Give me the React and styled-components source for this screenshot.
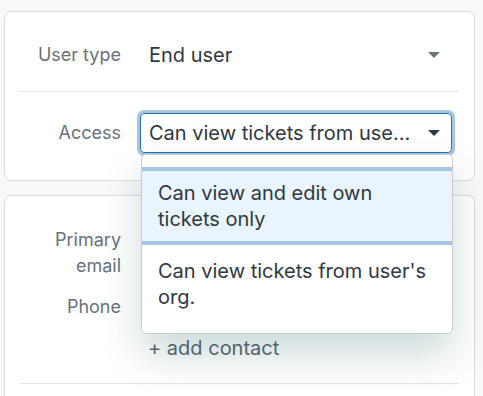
import styled, { createGlobalStyle } from "styled-components";

const GlobalStyle = createGlobalStyle`
  body {
    margin: 0;
    background: #f8f9f9;
    font-family: Inter, "Noto Sans", sans-serif;
    -webkit-font-smoothing: antialiased;
  }
`;

const accessOptions = [
  "Can view and edit own tickets only",
  "Can view tickets from user's org.",
];

function Caret({ color }) {
  return (
    <CaretSvg width="12" height="6" viewBox="0 0 12 6">
      <path d="M0 0h12L6 6z" fill={color} />
    </CaretSvg>
  );
}

function App() {
  return (
    <Page>
      <GlobalStyle />
      <Card>
        <Row $top={23} $bottom={16} $divider>
          <Label>User type</Label>
          <Trigger>
            <Value>End user</Value>
            <Caret color="#68737d" />
          </Trigger>
        </Row>
        <Row $top={21} $bottom={27}>
          <Label>Access</Label>
          <Field>
            <Trigger $focused>
              <Value>Can view tickets from user's org.</Value>
              <Caret color="#2f3941" />
            </Trigger>
            <Menu>
              {accessOptions.map((opt, i) => (
                <Item key={opt} $active={i === 0}>
                  {opt}
                </Item>
              ))}
            </Menu>
          </Field>
        </Row>
      </Card>

      <Card>
        <TextRow $top={31}>
          <Label>
            Primary
            <br />
            email
          </Label>
          <div />
        </TextRow>
        <TextRow $top={15}>
          <Label>Phone</Label>
          <div />
        </TextRow>
        <TextRow $top={15} $bottom={22} $divider>
          <div />
          <AddLink>+ add contact</AddLink>
        </TextRow>
        <TextRow $top={20} $bottom={20}>
          <Label>&nbsp;</Label>
          <div />
        </TextRow>
      </Card>
    </Page>
  );
}

export default App;

const Page = styled.div`
  display: flex;
  flex-direction: column;
  gap: 14px;
  padding: 11px 8px 0 4px;
  width: 471px;
`;

const Card = styled.div`
  background: #fff;
  border: 1px solid #d8dcde;
  border-radius: 7px;
  padding: 0 15px;
`;

const Row = styled.div`
  display: grid;
  grid-template-columns: 101px 312px;
  column-gap: 19px;
  align-items: center;
  padding: ${(p) => p.$top}px 0 ${(p) => p.$bottom}px;
  border-bottom: ${(p) => (p.$divider ? "1px solid #e2e5e7" : "none")};
`;

const TextRow = styled(Row)`
  padding: ${(p) => p.$top}px 0 ${(p) => p.$bottom || 0}px 0;
  align-items: start;
`;

const Label = styled.div`
  text-align: right;
  color: #68737d;
  font-size: 18px;
  line-height: 26px;
`;

const Field = styled.div`
  position: relative;
`;

const Trigger = styled.div`
  display: flex;
  align-items: center;
  height: 40px;
  box-sizing: border-box;
  padding: 0 11px 0 8px;
  border: 1px solid ${(p) => (p.$focused ? "#1f73b7" : "transparent")};
  border-radius: 4px;
  box-shadow: ${(p) =>
    p.$focused ? "0 0 0 3px rgba(31, 115, 183, 0.4)" : "none"};
  color: #2f3941;
  font-size: 20px;
`;

const Value = styled.span`
  flex: 1;
  min-width: 0;
  white-space: nowrap;
  overflow: hidden;
  text-overflow: ellipsis;
  padding-right: 14px;
`;

const CaretSvg = styled.svg`
  flex: none;
  display: block;
`;

const Menu = styled.div`
  position: absolute;
  z-index: 10;
  top: 100%;
  left: 1px;
  right: -1px;
  margin-top: 1px;
  background: #fff;
  border: 1px solid #c8cdd1;
  border-radius: 5px;
  padding: 12px 0 10px;
  box-shadow: 0 20px 40px rgba(4, 68, 77, 0.2);
`;

const Item = styled.div`
  padding: 9px 16px;
  border-top: 4px solid ${(p) => (p.$active ? "#a6c5e2" : "transparent")};
  border-bottom: 4px solid ${(p) => (p.$active ? "#a6c5e2" : "transparent")};
  background: ${(p) => (p.$active ? "#e9f4fd" : "transparent")};
  color: #2f3941;
  font-size: 20px;
  line-height: 26px;
`;

const AddLink = styled.div`
  color: #5c6970;
  font-size: 20px;
  line-height: 26px;
  padding-left: 8px;
`;
